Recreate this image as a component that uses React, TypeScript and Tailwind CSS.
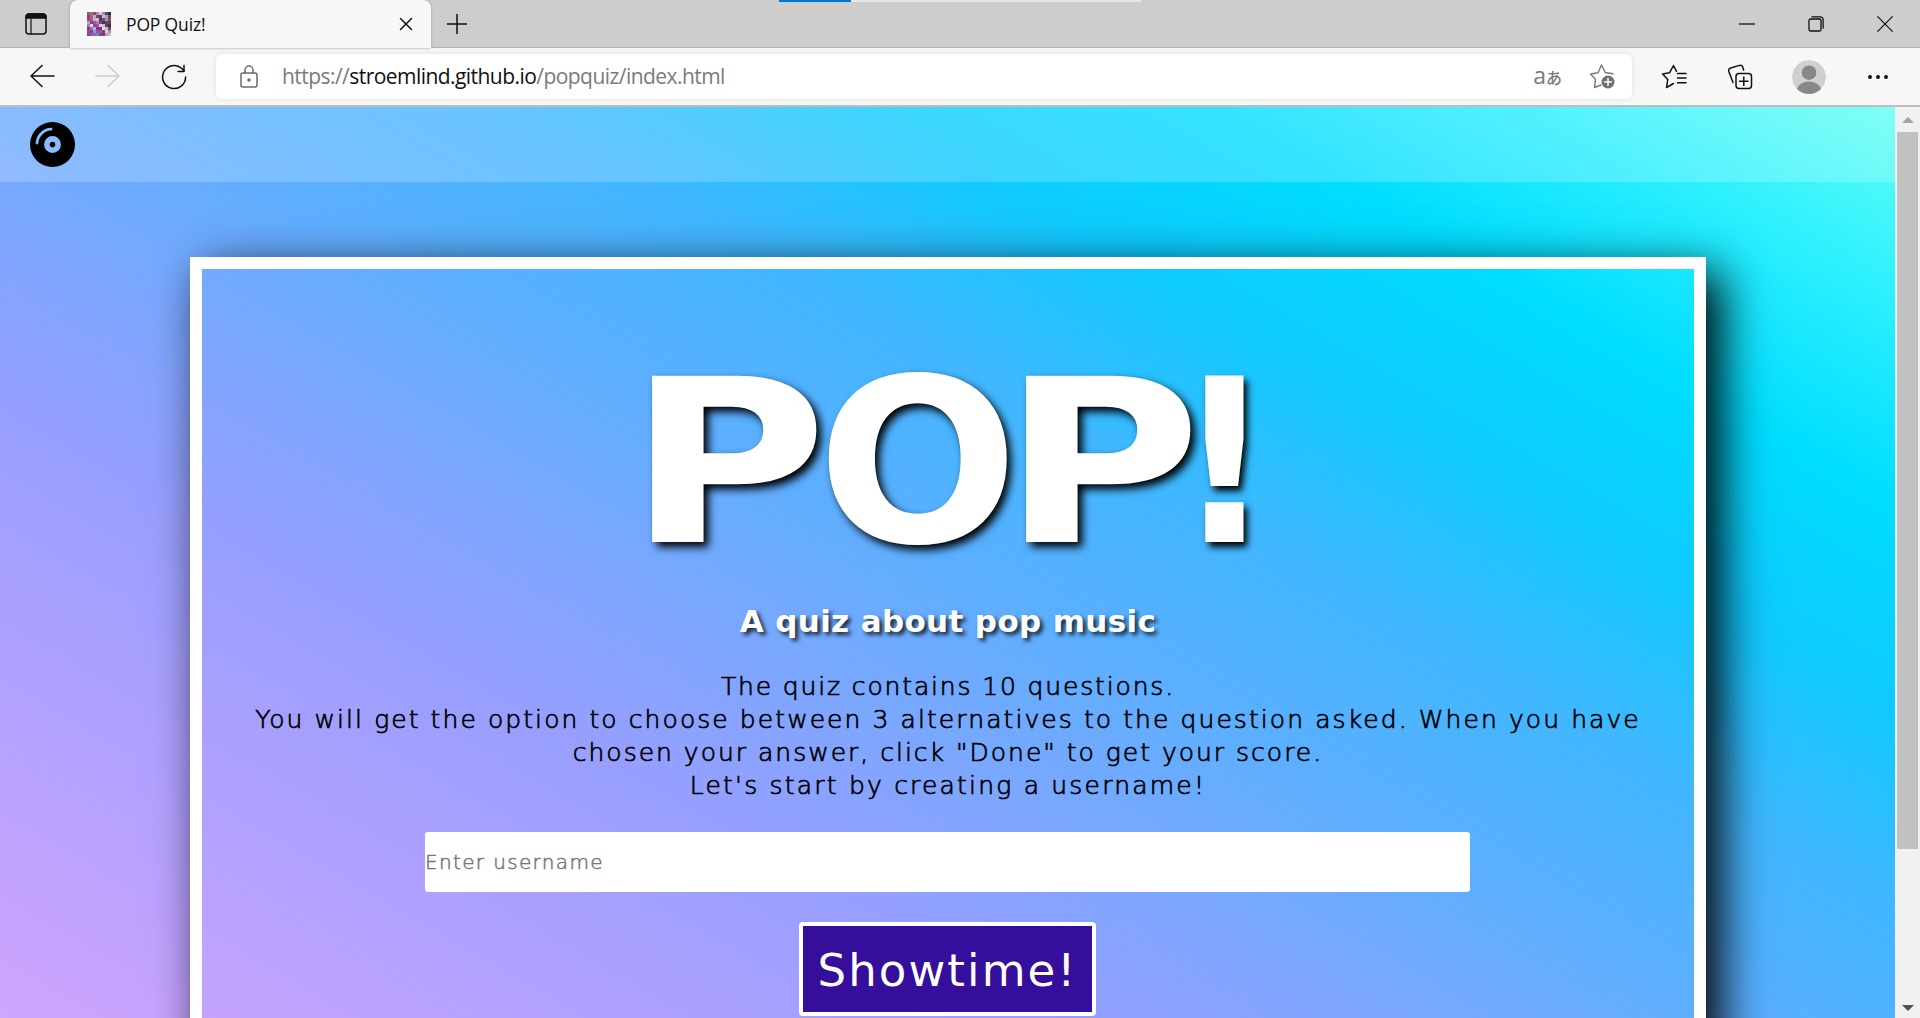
import type { ReactNode } from "react";
import { FaCompactDisc } from "react-icons/fa6";

const S = ({ w, h, c = "#111", sw = 1.5, children, className = "" }: { w: number; h: number; c?: string; sw?: number; children: ReactNode; className?: string }) => (
  <svg width={w} height={h} viewBox={`0 0 ${w} ${h}`} fill="none" stroke={c} strokeWidth={sw} strokeLinecap="round" strokeLinejoin="round" className={`shrink-0 ${className}`}>
    {children}
  </svg>
);

const FAVICON = [
  ["#7d6378", "#96728b", "#7b5468", "#b08ca2", "#d8c5dc", "#a98ca8", "#574a5e", "#1d3352"],
  ["#a33f6c", "#c9537a", "#d8a5c0", "#7c4560", "#584460", "#cbb8d6", "#a99fb8", "#5b5068"],
  ["#8d4a92", "#b8559a", "#7fd0dc", "#d6b9d2", "#4b3a52", "#6b5570", "#a98fae", "#8f4a66"],
  ["#b99fc4", "#8b3f86", "#b04a9e", "#d86a9c", "#7a4a6c", "#46384e", "#5e4a62", "#7d3c58"],
  ["#9d7ab0", "#e4d6ec", "#8f3f9c", "#a8489e", "#dcc8e4", "#c7b9d8", "#574660", "#3f3248"],
  ["#8a3f6e", "#a06cc0", "#c2a6dc", "#7a3a90", "#6a3a6c", "#e2dcee", "#d4b2d0", "#6d4a68"],
  ["#b0486e", "#7f3f8a", "#6fa8dc", "#a04aa8", "#b0508c", "#7a4668", "#dcd2e6", "#a8909e"],
  ["#7c4a72", "#a4569c", "#8d62c0", "#5f8fd0", "#8a4688", "#6c4a6e", "#b59cb8", "#cdbccb"],
];

function TabStrip() {
  return (
    <div className="relative flex h-12 shrink-0 items-end bg-[#cdcdcd] shadow-[inset_0_-2px_1px_-1px_#b4b4b4]">
      <div className="flex h-12 w-[70px] items-center pl-[25px]">
        <S w={22} h={22}>
          <rect x="1" y="1" width="20" height="20" rx="3" />
          <path d="M1.2 5V4a3 3 0 0 1 3-3h13.6a3 3 0 0 1 3 3v1z" fill="#111" />
          <path d="M6 6v15" strokeWidth="1.2" />
        </S>
      </div>
      <div className="flex h-12 w-[361px] items-center rounded-t-lg bg-[#f7f7f7] pl-[17px] shadow-[0_0_3px_#9a9a9a]">
        <svg width="24" height="24" viewBox="0 0 8 8" shapeRendering="crispEdges">
          {FAVICON.flatMap((r, y) => r.map((c, x) => <rect key={`${x}-${y}`} x={x} y={y} width="1.02" height="1.02" fill={c} />))}
        </svg>
        <span className="ml-[15px] pb-px font-['Open_Sans'] text-[17.5px] leading-6 tracking-[-0.15px] text-[#111]">POP Quiz!</span>
        <S w={14} h={14} className="mr-[18px] ml-auto">
          <path d="M1.5 1.5l11 11M12.5 1.5l-11 11" />
        </S>
      </div>
      <div className="flex h-12 items-center pb-px pl-[15px]">
        <S w={22} h={22}>
          <path d="M11 1v20M1 11h20" strokeLinecap="butt" />
        </S>
      </div>
      <div className="ml-auto flex h-12 items-center gap-[53px] pr-[27px] pb-px">
        <S w={16} h={16} sw={1.3}><path d="M0 8h16" strokeLinecap="butt" /></S>
        <S w={16} h={16} sw={1.3}>
          <rect x="1" y="3" width="12" height="12" rx="1.5" />
          <path d="M4 .9h8.5A2.6 2.6 0 0 1 15.1 3.500V12" />
        </S>
        <S w={16} h={16} sw={1.2}><path d="M.7.7l14.600 14.600M15.300.7L.7 15.300" /></S>
      </div>
      <div className="absolute top-0 left-[779px] flex h-0.5 w-[362px] bg-[#e8e8e8]">
        <div className="w-[72px] bg-[#0078d4]" />
      </div>
    </div>
  );
}

function Toolbar() {
  return (
    <div className="flex h-[59px] shrink-0 items-center border-b-2 border-[#bdbdbd] bg-[#f7f7f7] pl-[29px]">
      <S w={26} h={24} className="mb-px"><path d="M25 12H2M13 1.500L2 12l11 10.500" /></S>
      <S w={26} h={24} c="#cdcdcd" className="mb-px ml-10"><path d="M1 12h23M13 1.500L24 12 13 22.500" /></S>
      <S w={26} h={26} className="ml-10">
        <path d="M24.600 13A11.500 11.500 0 1 1 20.600 4.300L23 7" />
        <path d="M23 1.500V7.500H17" />
      </S>
      <div className="ml-[29px] flex h-[45px] w-[1416px] items-center rounded-md bg-white pl-6 shadow-[0_0_5px_#dcdcdc]">
        <S w={18} h={23} c="#6b6b6b">
          <rect x="1" y="8" width="16" height="14" rx="2" />
          <path d="M5 8V5a4 4 0 0 1 8 0v3" />
          <circle cx="9" cy="15" r="1" fill="#6b6b6b" />
        </S>
        <span className="ml-6 pb-0.5 font-['Open_Sans'] text-[21px] leading-8 tracking-[-0.55px] text-[#7a7a7a]">
          https://<span className="text-[#111]">stroemlind.github.io</span>/popquiz/index.html
        </span>
        <span className="mr-[27px] ml-auto flex items-baseline pb-0.5 text-[#7a7a7a]">
          <span className="font-['Open_Sans'] text-[23px] leading-6">a</span>
          <span className="font-['Noto_Sans_CJK_JP'] text-[16px] leading-6 font-medium">あ</span>
        </span>
        <S w={27} h={27} c="#7a7a7a" className="mr-4">
          <path d="M12 22l-6.500 2.500 1-8-5-5.500 7.500-1.300L12.500 2l3.700 7.500 7.800 1.200" />
          <circle cx="19" cy="19" r="6.500" fill="#6f6f6f" stroke="none" />
          <path d="M19 15.500v7M15.500 19h7" stroke="#fff" />
        </S>
      </div>
      <S w={26} h={26} className="ml-[29px]">
        <path d="M12.500 19.500L5.500 23.500l1.300-8L1.500 10l7-1.200L12.500 1.500l3 5.800M16.500 9.500H25M16.500 14H25M16.500 18.800H25" />
      </S>
      <S w={26} h={26} className="ml-10">
        <rect x="9" y="9.500" width="15.500" height="15" rx="3" />
        <path d="M16.800 13v8.500M12.500 17.200H21M6 18.500L1.800 7.500A3 3 0 0 1 3.600 4L12.500 1.400A2.800 2.800 0 0 1 15.800 3.200L16.600 6" />
      </S>
      <svg width="34" height="34" viewBox="0 0 34 34" className="ml-[39px] shrink-0">
        <clipPath id="avatar"><circle cx="17" cy="17" r="17" /></clipPath>
        <g clipPath="url(#avatar)">
          <circle cx="17" cy="17" r="17" fill="#d2d0ce" />
          <circle cx="17" cy="12.700" r="7.300" fill="#8a8886" />
          <ellipse cx="17" cy="32" rx="12.500" ry="10.500" fill="#8a8886" />
        </g>
      </svg>
      <svg width="20" height="6" viewBox="0 0 20 6" fill="#111" className="ml-[42px] shrink-0">
        <circle cx="2" cy="3" r="2" /><circle cx="10" cy="3" r="2" /><circle cx="18" cy="3" r="2" />
      </svg>
    </div>
  );
}

function Quiz() {
  return (
    <div className="h-[1095px] bg-[linear-gradient(to_right_top,#dba6ff,#cda5ff,#bca2ff,#aba0ff,#979ffe,#7ba7ff,#5bafff,#40b7ff,#0fcaff,#00ddff,#2befff,#61fff4)]">
      <header className="flex h-[75px] items-center bg-white/20 pb-px pl-[30px]">
        <FaCompactDisc size={45} color="#000" />
      </header>
      <main className="mt-[75px] ml-[190px] flex h-[1000px] w-[1516px] flex-col items-center border-12 border-white font-['DejaVu_Sans'] shadow-[15px_15px_45px_#000]">
        <h1 className="mt-[84px] ml-[425px] flex self-start text-[228px] leading-[220px] font-bold whitespace-nowrap text-white [text-shadow:4px_5px_8px_#000]">
          <span className="w-[190px] origin-left scale-x-120">P</span>
          <span className="w-[184px] origin-left scale-x-104">O</span>
          <span className="w-[174px] origin-left scale-x-120">P</span>
          <span className="w-[104px] origin-left scale-x-95">!</span>
        </h1>
        <h2 className="mt-[28px] text-[31px] leading-[40px] font-bold tracking-[0.35px] text-white [text-shadow:3px_3px_4px_#000c]">A quiz about pop music</h2>
        <div className="mt-[29px] flex flex-col items-center text-[25px] leading-[33px] font-extralight whitespace-nowrap text-black [-webkit-text-stroke:0.7px_#000]">
          <p className="tracking-[1.85px]">The quiz contains 10 questions.</p>
          <p className="tracking-[2.08px]">You will get the option to choose between 3 alternatives to the question asked. When you have</p>
          <p className="tracking-[2px]">chosen your answer, click "Done" to get your score.</p>
          <p className="tracking-[2.2px]">Let's start by creating a username!</p>
        </div>
        <div className="mt-[30px] mr-px flex h-[60px] w-[1045px] items-center rounded-[3px] bg-white text-[20px] font-extralight tracking-[1.35px] text-[#757575] [-webkit-text-stroke:0.5px_#757575]">Enter username</div>
        <div className="mt-[30px] mr-px flex h-[94px] w-[297px] items-center justify-center rounded-[4px] border-4 border-white bg-[#350e9c] pt-0.5 text-[45px] leading-none tracking-[2.1px] text-white">Showtime!</div>
      </main>
    </div>
  );
}

function Scrollbar() {
  return (
    <div className="flex w-[25px] shrink-0 flex-col items-center bg-[#f1f1f1]">
      <div className="flex h-[25px] items-center">
        <svg width="12" height="6" viewBox="0 0 12 6"><path d="M6 0l6 6H0z" fill="#a3a3a3" /></svg>
      </div>
      <div className="h-[717px] w-[21px] bg-[#c1c1c1]" />
      <div className="mt-auto flex h-[21px] items-center">
        <svg width="12" height="6" viewBox="0 0 12 6"><path d="M6 6l6-6H0z" fill="#505050" /></svg>
      </div>
    </div>
  );
}

export default function App() {
  return (
    <div className="flex h-[1018px] w-[1920px] flex-col overflow-hidden">
      <TabStrip />
      <Toolbar />
      <div className="flex min-h-0 flex-1">
        <div className="h-[911px] flex-1 overflow-hidden"><Quiz /></div>
        <Scrollbar />
      </div>
    </div>
  );
}
